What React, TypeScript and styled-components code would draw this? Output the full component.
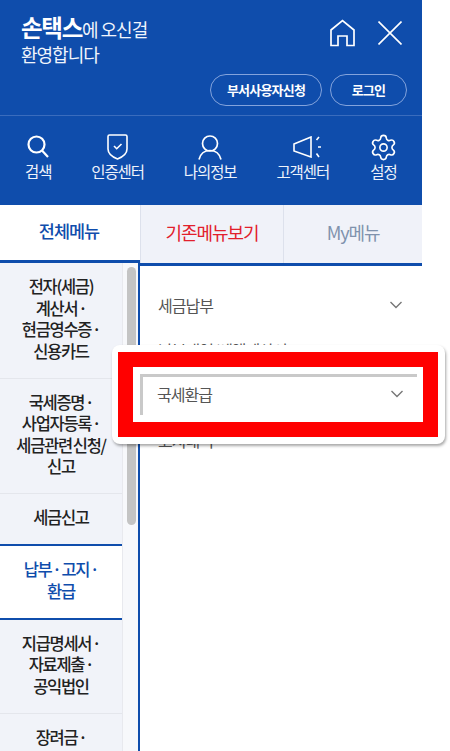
import React from "react";
import styled, { createGlobalStyle } from "styled-components";
import { Settings } from "lucide-react";

const BLUE = "#0f4dac";

const GlobalStyle = createGlobalStyle`
  html, body {
    margin: 0;
    padding: 0;
    background: #fff;
  }
  * {
    box-sizing: border-box;
  }
`;

const Page = styled.div`
  position: relative;
  width: 450px;
  height: 751px;
  overflow: hidden;
  font-family: "Noto Sans CJK KR", "Noto Sans", sans-serif;
  letter-spacing: -1px;
`;

const Panel = styled.div`
  display: flex;
  flex-direction: column;
  width: 422px;
  height: 751px;
`;

const Header = styled.header`
  background: ${BLUE};
  color: #fff;
  flex: none;
`;

const TopArea = styled.div`
  height: 116px;
  padding: 15px 15px 0 21px;
  border-bottom: 1px solid #3a6cbd;
`;

const TitleRow = styled.div`
  display: flex;
  justify-content: space-between;
  height: 59px;
`;

const Title = styled.h1`
  margin: 0;
  font-size: 18px;
  font-weight: 400;
  line-height: 25px;
  letter-spacing: -1px;
  color: #f1f5fc;
`;

const Brand = styled.strong`
  font-size: 23.5px;
  font-weight: 700;
  color: #fff;
  letter-spacing: -1.3px;
`;

const TopIcons = styled.div`
  display: flex;
  align-items: center;
  gap: 23px;
  height: 34px;
  margin: 1px 5px 0 0;
`;

const AuthRow = styled.div`
  display: flex;
  justify-content: flex-end;
  gap: 8px;
`;

const AuthButton = styled.button<{ $w: number }>`
  width: ${(p) => p.$w}px;
  height: 32px;
  padding: 0 0 2px;
  border: 1px solid #83a3dc;
  border-radius: 16px;
  background: transparent;
  color: #fff;
  font-family: inherit;
  font-size: 13px;
  font-weight: 700;
  letter-spacing: -0.8px;
`;

const Nav = styled.nav`
  display: flex;
  justify-content: space-between;
  height: 89px;
  padding: 17px 24px 0 25px;
`;

const NavItem = styled.div`
  display: flex;
  flex-direction: column;
  align-items: center;
`;

const NavIcon = styled.div<{ $shift?: number }>`
  display: flex;
  align-items: center;
  justify-content: center;
  height: 28px;
  margin-left: ${(p) => p.$shift ?? 0}px;
`;

const NavLabel = styled.span`
  font-size: 15.5px;
  line-height: 21px;
  letter-spacing: -1.1px;
  color: #eef3fb;
  white-space: nowrap;
`;

const Body = styled.div`
  display: flex;
  flex: 1;
  min-height: 0;
`;

const LeftPane = styled.div`
  display: flex;
  flex-direction: column;
  flex: none;
  width: 140px;
  min-height: 0;
`;

const ActiveTab = styled.div`
  display: flex;
  align-items: center;
  justify-content: center;
  flex: none;
  height: 58px;
  padding: 0 2px 4px 0;
  border-bottom: 3px solid ${BLUE};
  color: ${BLUE};
  font-size: 17.5px;
  font-weight: 500;
`;

const SideBody = styled.div`
  display: flex;
  flex: 1;
  min-height: 0;
  overflow: hidden;
  border-right: 2px solid ${BLUE};
`;

const SideMenu = styled.ul`
  flex: none;
  width: 122px;
  margin: 0;
  padding: 0;
  list-style: none;
  background: #f1f3f9;
`;

const SideItem = styled.li<{ $active?: boolean }>`
  padding: 13px 0 15.5px;
  border-bottom: 1px solid #e4e6ec;
  text-align: center;
  font-size: 16.5px;
  font-weight: 500;
  line-height: 21.5px;
  letter-spacing: -1.3px;
  word-spacing: -1.5px;
  color: #222;
  ${(p) =>
    p.$active &&
    `
    background: #fff;
    color: ${BLUE};
    border-top: 2px solid ${BLUE};
    border-bottom: 2px solid ${BLUE};
    margin-top: -1px;
  `}
`;

const ScrollTrack = styled.div`
  flex: 1;
  padding: 4px 2px 0 4px;
  background: #f7f8fb;
  border-left: 1px solid #e8e9ee;
`;

const ScrollThumb = styled.div`
  width: 9px;
  height: 258px;
  border-radius: 5px;
  background: #c4c4c4;
`;

const RightPane = styled.div`
  display: flex;
  flex-direction: column;
  flex: 1;
  min-width: 0;
`;

const TabRow = styled.div`
  display: flex;
  flex: none;
  height: 61px;
  border-bottom: 3px solid ${BLUE};
  background: #f0f2f9;
`;

const Tab = styled.div<{ $color: string; $w: number }>`
  display: flex;
  align-items: center;
  justify-content: center;
  width: ${(p) => p.$w}px;
  padding-bottom: 5px;
  border-left: 1px solid #dde1ec;
  color: ${(p) => p.$color};
  font-size: 18px;
  font-weight: 400;
  letter-spacing: -1.1px;
`;

const SubMenu = styled.ul`
  margin: 0;
  padding: 16px 0 0;
  list-style: none;
`;

const SubRow = styled.li`
  display: flex;
  align-items: center;
  justify-content: space-between;
  height: 45px;
  padding: 0 19px 0 18px;
  font-size: 16px;
  color: #555;
`;

const HighlightCard = styled.div`
  position: absolute;
  left: 112px;
  top: 345px;
  width: 333px;
  height: 99px;
  padding: 7px 7px 7px 6px;
  border-radius: 8px;
  background: #fff;
  box-shadow: 1px 2px 3px rgba(0, 0, 0, 0.35);
`;

const RedFrame = styled.div`
  height: 85px;
  padding: 7px 6px 6px 7px;
  border: 15px solid #ff0000;
  background: #fff;
`;

const GreyCorner = styled.div`
  display: flex;
  align-items: center;
  justify-content: space-between;
  height: 41px;
  padding: 0 13px 5px 14px;
  border-top: 3px solid #c9c9c9;
  border-left: 3px solid #c9c9c9;
  font-size: 16px;
  color: #555;
`;

const Chevron = () => (
  <svg width="14" height="8" viewBox="0 0 14 8" fill="none" stroke="#777" strokeWidth="1.4">
    <path d="M1.5 1 L7 6.5 L12.5 1" />
  </svg>
);

const HomeIcon = () => (
  <svg width="25" height="28" viewBox="0 0 25 28" fill="none" stroke="#fff" strokeWidth="1.7">
    <path d="M1 26.5 V11 L12.5 1.5 L24 11 V26.5 H17 V17 H8 V26.5 Z" />
  </svg>
);

const CloseIcon = () => (
  <svg width="24" height="24" viewBox="0 0 24 24" fill="none" stroke="#fff" strokeWidth="1.6">
    <path d="M0.5 0.5 L23.5 23.5 M23.5 0.5 L0.5 23.5" />
  </svg>
);

const SearchIcon = () => (
  <svg width="24" height="26" viewBox="0 0 24 26" fill="none" stroke="#fff" strokeWidth="2.2">
    <circle cx="10.5" cy="10.5" r="8" />
    <path d="M16 16.5 L22 23" />
  </svg>
);

const ShieldIcon = () => (
  <svg width="21" height="26" viewBox="0 0 21 26" fill="none" stroke="#fff" strokeWidth="1.6">
    <path d="M2.5 1 H18.5 Q20 1 20 2.5 V15 C20 20 15.5 23 10.5 25 C5.5 23 1 20 1 15 V2.5 Q1 1 2.5 1 Z" />
    <path d="M7 12 L9.7 14.7 L14.5 10" />
  </svg>
);

const UserIcon = () => (
  <svg width="24" height="25" viewBox="0 0 24 25" fill="none" stroke="#fff" strokeWidth="1.7">
    <circle cx="12" cy="8.5" r="7.5" />
    <path d="M1 24.5 C2.5 18.5 7 15.5 12 15.5 C17 15.5 21.5 18.5 23 24.5" />
  </svg>
);

const SpeakerIcon = () => (
  <svg width="28" height="22" viewBox="0 0 28 22" fill="none" stroke="#fff" strokeWidth="1.6">
    <path d="M1 8 L18 1 V21 L1 15 Z" />
    <path d="M23.5 4 L26 1 M25 11 H28 M23.5 17.5 L26 21" />
  </svg>
);

const navItems = [
  { label: "검색", icon: <SearchIcon />, shift: 0 },
  { label: "인증센터", icon: <ShieldIcon />, shift: 0 },
  { label: "나의정보", icon: <UserIcon />, shift: 0 },
  { label: "고객센터", icon: <SpeakerIcon />, shift: 8 },
  { label: "설정", icon: <Settings size={29} color="#fff" strokeWidth={1.35} />, shift: 0 },
];

const sideItems = [
  { lines: ["전자(세금)", "계산서 ·", "현금영수증 ·", "신용카드"] },
  { lines: ["국세증명 ·", "사업자등록 ·", "세금관련 신청/", "신고"] },
  { lines: ["세금신고"] },
  { lines: ["납부 · 고지 ·", "환급"], active: true },
  { lines: ["지급명세서 ·", "자료제출 ·", "공익법인"] },
  { lines: ["장려금 ·"] },
];

const subItems = ["세금납부", "납부내역/세액계산서", "국세환급", "고지내역"];

const App = () => {
  return (
    <Page>
      <GlobalStyle />
      <Panel>
        <Header>
          <TopArea>
            <TitleRow>
              <Title>
                <Brand>손택스</Brand>에 오신걸
                <br />
                환영합니다
              </Title>
              <TopIcons>
                <HomeIcon />
                <CloseIcon />
              </TopIcons>
            </TitleRow>
            <AuthRow>
              <AuthButton $w={112}>부서사용자신청</AuthButton>
              <AuthButton $w={77}>로그인</AuthButton>
            </AuthRow>
          </TopArea>
          <Nav>
            {navItems.map((item) => (
              <NavItem key={item.label}>
                <NavIcon $shift={item.shift}>{item.icon}</NavIcon>
                <NavLabel>{item.label}</NavLabel>
              </NavItem>
            ))}
          </Nav>
        </Header>
        <Body>
          <LeftPane>
            <ActiveTab>전체메뉴</ActiveTab>
            <SideBody>
              <SideMenu>
                {sideItems.map((item) => (
                  <SideItem key={item.lines[0]} $active={item.active}>
                    {item.lines.map((line) => (
                      <div key={line}>{line}</div>
                    ))}
                  </SideItem>
                ))}
              </SideMenu>
              <ScrollTrack>
                <ScrollThumb />
              </ScrollTrack>
            </SideBody>
          </LeftPane>
          <RightPane>
            <TabRow>
              <Tab $w={143} $color="#e2202c">기존메뉴보기</Tab>
              <Tab $w={139} $color="#7f92ad">My메뉴</Tab>
            </TabRow>
            <SubMenu>
              {subItems.map((label) => (
                <SubRow key={label}>
                  {label}
                  <Chevron />
                </SubRow>
              ))}
            </SubMenu>
          </RightPane>
        </Body>
      </Panel>
      <HighlightCard>
        <RedFrame>
          <GreyCorner>
            국세환급
            <Chevron />
          </GreyCorner>
        </RedFrame>
      </HighlightCard>
    </Page>
  );
};

export default App;
